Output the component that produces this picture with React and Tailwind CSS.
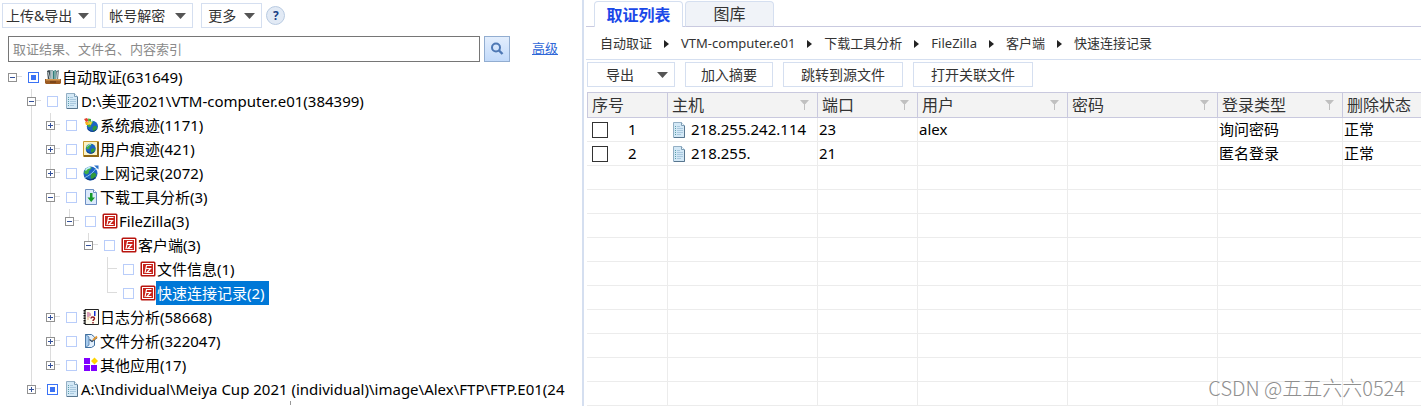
import { useState } from "react";

const ServerIcon = () => (
  <svg width="16" height="16" viewBox="0 0 16 16" className="shrink-0">
    <path d="M2 2l2-1 2 1v9H3z" fill="#3c4a50" />
    <path d="M5 1h3v10H5z" fill="#8fa7ad" />
    <path d="M8 2l3-1v10H8z" fill="#2f7d78" />
    <path d="M11 2l3-1-1 10h-2z" fill="#6c7f86" />
    <path d="M3 3l2 7M7 2v8M10 2v8M12.5 3l-1 7" stroke="#dfe9e9" strokeWidth="0.8" />
    <path d="M0 10h16v4l-1 1H1l-1-1z" fill="#9c5b22" />
    <path d="M1 10h14v1.5H1z" fill="#d29a55" />
    <path d="M5 12.5h6v1H5z" fill="#5d3210" />
  </svg>
);

const DocIcon = () => (
  <svg width="16" height="16" viewBox="0 0 16 16" className="shrink-0">
    <path d="M2.5.5h8l3 3v12h-11z" fill="#d3e8f6" stroke="#93afc4" />
    <path d="M10.5.5v3h3" fill="#f4fafd" stroke="#7d9db5" />
    <path d="M13.5 4v11.5H3" fill="none" stroke="#58768f" />
    <path d="M6 4.5h3M6 6.5h6M6 8.5h6M6 10.5h6M6 12.5h4" stroke="#a9c8de" />
    <path d="M4 4.5h1M4 6.5h1M4 8.5h1M4 10.5h1M4 12.5h1" stroke="#5b9fa8" />
  </svg>
);

const Globe = () => (
  <>
    <circle cx="8" cy="8" r="7" fill="#1c63c4" />
    <path d="M3 3.500c2-2 5-2.200 6.500-1.500L8 4 6.500 5.500 6 8 3.500 9 1.500 7z" fill="#3fae49" />
    <path d="M9 8l3-1 2 2-2 4-3 1-1-3z" fill="#2f9a3c" />
    <path d="M3 5c1-2 3-3 5-3" stroke="#c7f0ff" strokeWidth="1.300" fill="none" />
    <path d="M2 11c2 3 7 5 11 1" stroke="#0c3678" strokeWidth="1.200" fill="none" />
  </>
);

const SystemIcon = () => (
  <svg width="16" height="16" viewBox="0 0 16 16" className="shrink-0">
    <g transform="translate(3 3) scale(.8)">
      <Globe />
    </g>
    <path d="M1 2l3-1 2 3-3 1z" fill="#e2402c" />
    <path d="M5 1.500l3 .5v3L5.500 5z" fill="#48b03c" />
    <path d="M2 5l3 0 1 3-3 0z" fill="#f5b51d" />
    <path d="M6 4l3 1-1 3-3-1z" fill="#f4d43a" />
  </svg>
);

const UserTraceIcon = () => (
  <svg width="16" height="16" viewBox="0 0 16 16" className="shrink-0">
    <path d="M.5.5h15v15H.5z" fill="#fbf3c6" stroke="#c99b2e" />
    <path d="M15 1v14H1" fill="none" stroke="#8f6714" strokeWidth="2" />
    <g transform="translate(2 2) scale(.72)">
      <Globe />
    </g>
  </svg>
);

const WebIcon = () => (
  <svg width="16" height="16" viewBox="0 0 16 16" className="shrink-0">
    <g transform="translate(-.5 .5)">
      <Globe />
    </g>
    <path d="M1 13C6 11 11 7 14 2" stroke="#8cc9f2" strokeWidth="1" fill="none" />
    <path d="M11 .5h4.500v4z" fill="#2c71c9" />
  </svg>
);

const DownloadIcon = () => (
  <svg width="16" height="16" viewBox="0 0 16 16" className="shrink-0">
    <path d="M2.500.5h8l3 3v12h-11z" fill="#dbe9fb" stroke="#6d8fc4" />
    <path d="M10.500.5v3h3" fill="#fff" stroke="#6d8fc4" />
    <path d="M7 4h2.500v4.500H12L8.200 13 4.500 8.500H7z" fill="#159a2c" />
  </svg>
);

const FileZillaIcon = () => (
  <svg width="16" height="16" viewBox="0 0 16 16" className="shrink-0">
    <rect x=".5" y=".5" width="15" height="15" rx="1.500" fill="#b8150f" />
    <rect x="2.500" y="2.500" width="11" height="11" fill="#c8241c" stroke="#fff" />
    <path d="M5 12L6.500 4.500h5M6 7.500h4.500L7 11.500h4.500" fill="none" stroke="#fff" strokeWidth="1.200" />
  </svg>
);

const LogIcon = () => (
  <svg width="16" height="16" viewBox="0 0 16 16" className="shrink-0">
    <path d="M2 .5h13.500v15H2z" fill="#fffdf0" stroke="#222" />
    <path d="M1.500 1v14" stroke="#111" strokeWidth="2" strokeDasharray="1.500 1" />
    <path d="M4 4h3M4 6h4M4 8h3M4 10h2" stroke="#e0a070" />
    <path d="M5 3v5M7 4v3" stroke="#c06fc0" />
    <path d="M11 2h1.500v5H11z" fill="#1530d8" />
    <path d="M8 9.500c0-2 3.500-2 3.500 0 0 1.200-1.500 1-1.500 2.500M10 13v1.500" fill="none" stroke="#8d1520" strokeWidth="1.400" />
  </svg>
);

const FileEditIcon = () => (
  <svg width="16" height="16" viewBox="0 0 16 16" className="shrink-0">
    <path d="M2.500 1.500h6l3 2.500v8.500l-3 2h-6z" fill="#e2effc" stroke="#3f6f9f" />
    <path d="M2.500 1.500L6 4v8l-3.500 2.500z" fill="#a7cbed" stroke="#3f6f9f" strokeWidth="0.7" />
    <path d="M6.500 6.500l2.500 2 5-4" fill="none" stroke="#27405c" strokeWidth="1.200" />
    <path d="M10 7l4-3.500" stroke="#e59a36" strokeWidth="1.800" />
  </svg>
);

const AppsIcon = () => (
  <svg width="16" height="16" viewBox="0 0 16 16" className="shrink-0">
    <path d="M1 1h6v6H1zM1 8h6v6H1zM8 8h6v6H8z" fill="#8000ff" />
    <path d="M11.500 0.500L15 4l-3.500 3.500L8 4z" fill="#ffd500" />
  </svg>
);

const FilterIcon = () => (
  <svg width="9" height="10" viewBox="0 0 9 10" className="shrink-0">
    <path d="M0 0h9L5.500 4H5v6H4V4h-.5z" fill="#c0c0c0" />
  </svg>
);

const DownArrow = () => (
  <svg width="11" height="6" viewBox="0 0 11 6" className="shrink-0">
    <path d="M0 0h11L5.500 6z" fill="#555" />
  </svg>
);

const RightArrow = () => (
  <svg width="5" height="8" viewBox="0 0 5 8" className="shrink-0">
    <path d="M0 0l5 4-5 4z" fill="#222" />
  </svg>
);

// guides: one flag per ancestor column, true when its line runs on past the row
const treeRows = [
  { id: "root", label: "自动取证(631649)", icon: ServerIcon, guides: [], toggle: "-", checked: true, first: true, last: true },
  { id: "vtm", label: "D:\\美亚2021\\VTM-computer.e01(384399)", icon: DocIcon, guides: [false], toggle: "-" },
  { id: "system", label: "系统痕迹(1171)", icon: SystemIcon, guides: [false, true], toggle: "+" },
  { id: "user", label: "用户痕迹(421)", icon: UserTraceIcon, guides: [false, true], toggle: "+" },
  { id: "web", label: "上网记录(2072)", icon: WebIcon, guides: [false, true], toggle: "+" },
  { id: "download", label: "下载工具分析(3)", icon: DownloadIcon, guides: [false, true], toggle: "-" },
  { id: "filezilla", label: "FileZilla(3)", icon: FileZillaIcon, guides: [false, true, true], toggle: "-", last: true },
  { id: "client", label: "客户端(3)", icon: FileZillaIcon, guides: [false, true, true, false], toggle: "-", last: true },
  { id: "fileinfo", label: "文件信息(1)", icon: FileZillaIcon, guides: [false, true, true, false, false] },
  { id: "quick", label: "快速连接记录(2)", icon: FileZillaIcon, guides: [false, true, true, false, false], last: true },
  { id: "log", label: "日志分析(58668)", icon: LogIcon, guides: [false, true], toggle: "+" },
  { id: "file", label: "文件分析(322047)", icon: FileEditIcon, guides: [false, true], toggle: "+" },
  { id: "other", label: "其他应用(17)", icon: AppsIcon, guides: [false, true], toggle: "+", last: true },
  { id: "ftp", label: "A:\\Individual\\Meiya Cup 2021 (individual)\\image\\Alex\\FTP\\FTP.E01(24", icon: DocIcon, guides: [false], toggle: "+", checked: true, last: true },
];

const columns = [
  { title: "序号", width: "w-[81px]" },
  { title: "主机", width: "w-[150px]", filter: true },
  { title: "端口", width: "w-[100px]", filter: true },
  { title: "用户", width: "w-[150px]", filter: true },
  { title: "密码", width: "w-[150px]", filter: true },
  { title: "登录类型", width: "w-[125px]", filter: true },
  { title: "删除状态", width: "" },
];

const records = [
  { host: "218.255.242.114", port: "23", user: "alex", login: "询问密码", status: "正常" },
  { host: "218.255.", port: "21", user: "", login: "匿名登录", status: "正常" },
];

const crumbs = ["自动取证", "VTM-computer.e01", "下载工具分析", "FileZilla", "客户端", "快速连接记录"];

const TreeRow = ({ row, selected, onSelect }) => {
  const Icon = row.icon;
  return (
    <li className="flex h-6 items-center">
      {row.guides.map((line, i) => (
        <span key={i} className="flex h-6 w-[19px] shrink-0 justify-center">
          {line && <span className="w-px bg-[#dcdcdc]" />}
        </span>
      ))}
      <span className="grid h-6 w-[19px] shrink-0 grid-cols-[9px_1px_9px] grid-rows-[12px_12px]">
        <span className={`col-start-2 row-start-1 ${row.first ? "" : "bg-[#dcdcdc]"}`} />
        <span className="col-start-3 row-start-1 border-b border-[#dcdcdc]" />
        <span className={`col-start-2 row-start-2 ${row.last ? "" : "bg-[#dcdcdc]"}`} />
        {row.toggle && (
          <button
            type="button"
            aria-label={row.toggle === "+" ? "展开" : "折叠"}
            className="z-10 col-span-3 col-start-1 row-span-2 row-start-1 flex h-[9px] w-[9px] items-center justify-center place-self-center border border-[#919191] bg-white"
          >
            <svg width="5" height="5" viewBox="0 0 5 5">
              <path d={row.toggle === "+" ? "M0 2.500h5M2.500 0v5" : "M0 2.500h5"} stroke="#33509a" />
            </svg>
          </button>
        )}
      </span>
      <input
        id={`node-${row.id}`}
        type="checkbox"
        defaultChecked={row.checked}
        className="mx-1.5 h-[11px] w-[11px] shrink-0 appearance-none border border-[#b9cdfa] bg-white p-0.5 checked:border-[#3a72f5] checked:bg-[#3a72f5] checked:bg-clip-content"
      />
      <Icon />
      <label
        htmlFor={`node-${row.id}`}
        onClick={onSelect}
        className={`h-6 whitespace-nowrap pr-1 pl-px leading-6 ${selected ? "bg-[#0078d7] text-white" : "text-black"}`}
      >
        {row.label}
      </label>
    </li>
  );
};

const Sidebar = () => {
  const [selected, setSelected] = useState("quick");

  return (
    <aside className="flex w-[41.1%] shrink-0 flex-col overflow-hidden border-r-2 border-[#d5dff0] pr-0.5">
      <div className="flex items-center pt-[3px] pl-0.5 text-sm text-[#333]">
        <button type="button" className="flex h-[25px] items-center gap-1.5 whitespace-nowrap border border-[#d5dff0] pr-1.5 pl-[3px]">
          上传&amp;导出
          <DownArrow />
        </button>
        <button type="button" className="ml-1.5 flex h-[25px] items-center gap-2.5 whitespace-nowrap border border-[#d5dff0] px-1.5">
          帐号解密
          <DownArrow />
        </button>
        <button type="button" className="ml-2 flex h-[25px] items-center gap-2 whitespace-nowrap border border-[#d5dff0] px-1.5">
          更多
          <DownArrow />
        </button>
        <button
          type="button"
          aria-label="帮助"
          className="ml-1 flex h-[19px] w-[19px] items-center justify-center rounded-full border border-[#b9cbe2] bg-[#e2eaf5] text-xs font-bold text-[#173f86]"
        >
          ?
        </button>
      </div>

      <form className="mt-2 flex items-center pr-[22px] pl-2" onSubmit={(e) => e.preventDefault()}>
        <input
          type="text"
          aria-label="搜索"
          placeholder="取证结果、文件名、内容索引"
          className="h-[26px] min-w-0 flex-1 border border-[#767676] px-1 text-[13px] placeholder:text-[#8a8a8a]"
        />
        <button
          type="submit"
          aria-label="搜索"
          className="ml-1 flex h-[26px] w-[26px] shrink-0 items-center justify-center border border-[#92add0] bg-linear-to-b from-[#e3eefd] to-[#c2dafa]"
        >
          <svg width="14" height="14" viewBox="0 0 14 14">
            <circle cx="6" cy="5.500" r="4" fill="none" stroke="#4e78b4" strokeWidth="2" />
            <path d="M9 8.500l3.500 3.500" stroke="#4e78b4" strokeWidth="2.400" />
          </svg>
        </button>
        <a href="#advanced" className="ml-[22px] shrink-0 text-[13px] text-[#2f68d8] underline">
          高级
        </a>
      </form>

      <ul className="mt-[3px] overflow-hidden pl-[3px] text-[15px]">
        {treeRows.map((row) => (
          <TreeRow
            key={row.id}
            row={row}
            selected={selected === row.id}
            onSelect={() => setSelected(row.id)}
          />
        ))}
      </ul>
      <div className="mx-auto h-1 w-px bg-[#999]" />
    </aside>
  );
};

const RecordTable = () => (
  <table className="w-full table-fixed border-separate border-spacing-0 text-left text-[15px] whitespace-nowrap">
    <thead>
      <tr className="h-[26px]">
        {columns.map((col) => (
          <th
            key={col.title}
            className={`border-y border-r border-[#c9c9de] bg-[#f3f3f3] p-0 text-base leading-6 font-normal text-[#333] first:border-l last:border-r-0 ${col.width}`}
          >
            <span className="flex items-center justify-between pr-2 pl-1">
              {col.title}
              {col.filter && <FilterIcon />}
            </span>
          </th>
        ))}
      </tr>
    </thead>
    <tbody className="text-black [&_td]:h-6 [&_td]:border-r [&_td]:border-b [&_td]:border-[#ececec] [&_td]:p-0 [&_td]:pl-px [&_td]:leading-[23px] [&_td:last-child]:border-r-0">
      {records.map((rec, i) => (
        <tr key={rec.host}>
          <td>
            <label className="flex items-center gap-5 pl-1">
              <input type="checkbox" className="h-4 w-4 appearance-none border border-[#333] bg-white checked:bg-[#333]" />
              {i + 1}
            </label>
          </td>
          <td>
            <span className="flex items-center gap-1 pl-0.5">
              <DocIcon />
              {rec.host}
            </span>
          </td>
          <td>{rec.port}</td>
          <td>{rec.user}</td>
          <td />
          <td>{rec.login}</td>
          <td>{rec.status}</td>
        </tr>
      ))}
      {Array.from({ length: 10 }, (_, i) => (
        <tr key={i}>
          {columns.map((col) => (
            <td key={col.title} />
          ))}
        </tr>
      ))}
    </tbody>
  </table>
);

const Main = () => (
  <main className="min-w-0 flex-1 overflow-hidden pl-0.5">
    <div className="flex items-end pt-px text-base leading-6">
      <span className="w-2 border-b border-[#c9cae0]" />
      <button type="button" className="h-[26px] w-[89px] rounded-t border border-b-0 border-[#d5dff0] bg-white font-bold text-[#1a48e8]">
        取证列表
      </button>
      <span className="w-0.5 border-b border-[#c9cae0]" />
      <button type="button" className="h-[26px] w-[89px] rounded-t border border-[#d5dff0] border-b-[#c9cae0] bg-[#f0f3f8] text-[#333]">
        图库
      </button>
      <span className="flex-1 border-b border-[#c9cae0]" />
    </div>

    <nav className="flex h-[33px] items-center gap-3 border-b border-[#d5dff0] pt-0.5 pl-3.5 text-[13px] whitespace-nowrap text-[#333]">
      {crumbs.map((crumb, i) => (
        <span key={crumb} className="flex items-center gap-3">
          {i > 0 && <RightArrow />}
          <a href="#crumb">{crumb}</a>
        </span>
      ))}
    </nav>

    <div className="flex gap-2.5 py-0.5 pl-px text-sm text-[#333]">
      <button type="button" className="flex h-[25px] w-22 items-center justify-between border border-[#d5dff0] pr-1.5 pl-[18px]">
        导出
        <DownArrow />
      </button>
      <button type="button" className="h-[25px] w-22 border border-[#d5dff0]">加入摘要</button>
      <button type="button" className="h-[25px] w-30 border border-[#d5dff0]">跳转到源文件</button>
      <button type="button" className="h-[25px] w-30 border border-[#d5dff0]">打开关联文件</button>
    </div>

    <div className="mt-[3px] pl-px">
      <RecordTable />
    </div>
  </main>
);

const App = () => (
  <div
    lang="zh-CN"
    className="relative flex min-h-screen overflow-hidden bg-white font-['Noto_Sans','Noto_Sans_CJK_SC',sans-serif]"
  >
    <Sidebar />
    <Main />
    <p className="pointer-events-none absolute right-4 bottom-1 font-['Noto_Sans_CJK_SC',sans-serif] text-xl leading-7 font-light text-[#8f8f8f]">
      CSDN @五五六六0524
    </p>
  </div>
);

export default App;
